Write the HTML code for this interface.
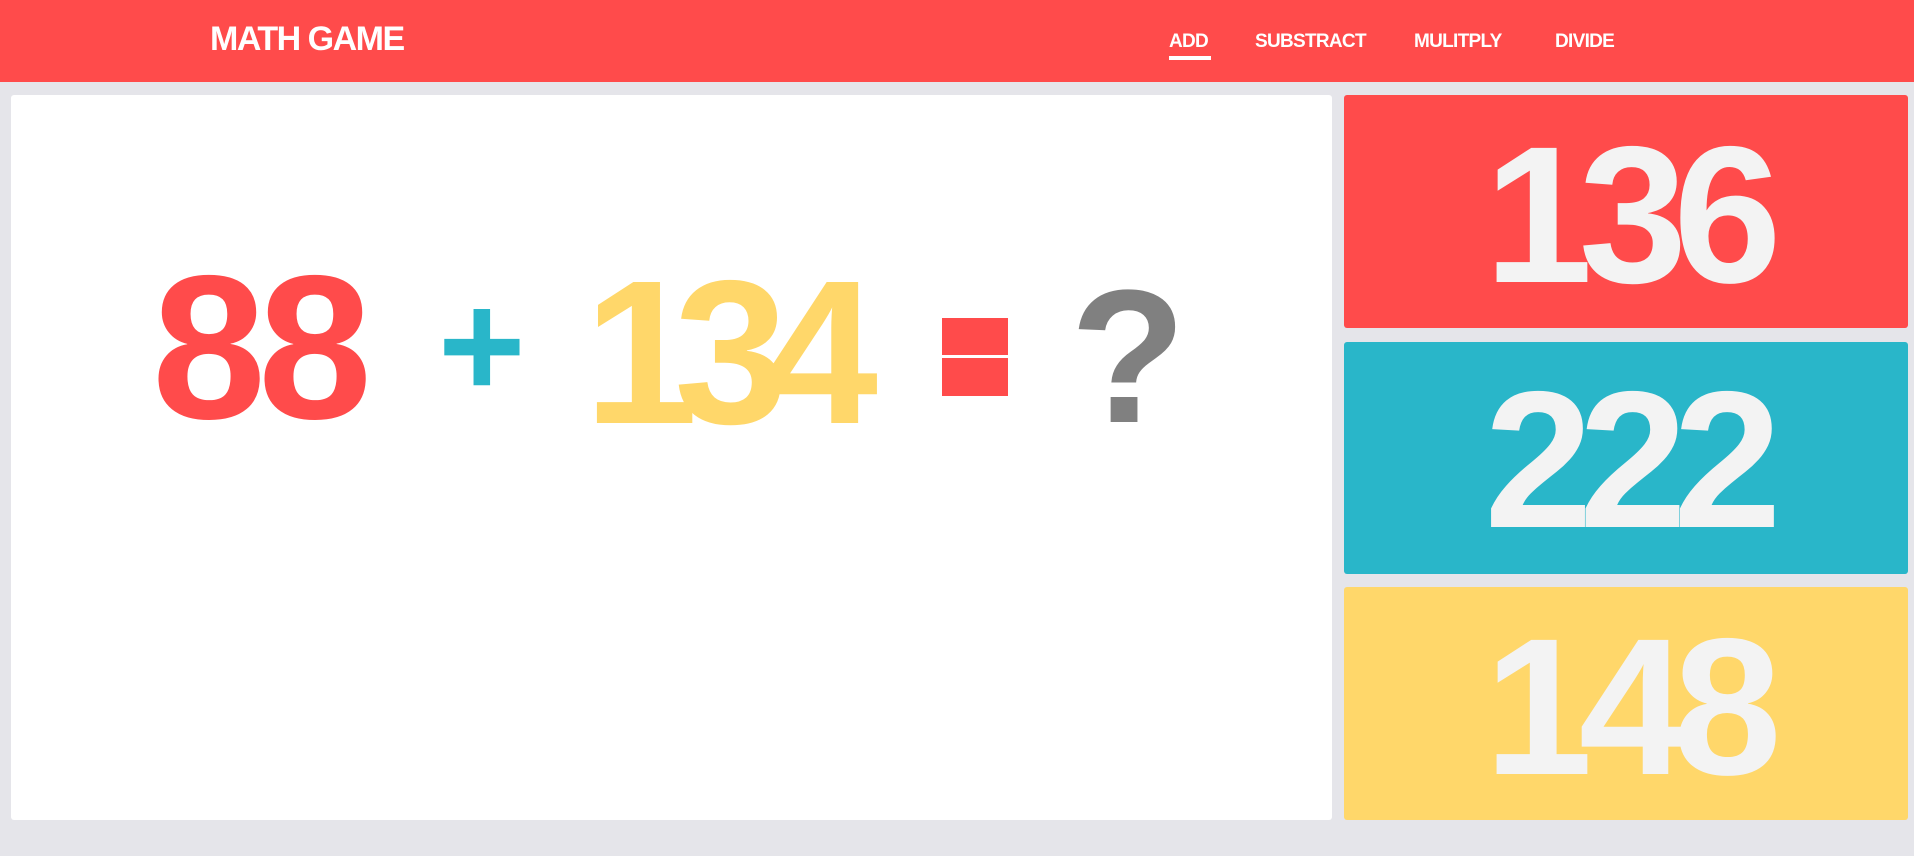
<!DOCTYPE html>
<html><head><meta charset="utf-8"><style>
body{margin:0;width:1914px;height:856px;background:#e5e5ea;font-family:"Liberation Sans",sans-serif;font-weight:900;position:relative;overflow:hidden}
.h{position:absolute;left:0;top:0;width:1914px;height:82px;background:#ff4b4b}
.a{position:absolute;white-space:nowrap;line-height:1}
.logo{left:210px;top:22px;font-size:34px;color:#fff;letter-spacing:-1.5px}
.nav{top:32px;font-size:19px;color:#fff;letter-spacing:-0.7px}
.card{position:absolute;border-radius:3px}
.n{position:absolute;text-align:center;font-weight:900;line-height:1;letter-spacing:-14px}
</style></head><body>
<div class="h"></div>
<div class="a logo">MATH GAME</div>
<div class="a nav" style="left:1169px">ADD</div>
<div style="position:absolute;left:1169px;top:56px;width:42px;height:4px;background:#fff"></div>
<div class="a nav" style="left:1255px">SUBSTRACT</div>
<div class="a nav" style="left:1414px">MULITPLY</div>
<div class="a nav" style="left:1555px">DIVIDE</div>
<div class="card" style="left:11px;top:95px;width:1321px;height:725px;background:#fff"></div>
<div class="card" style="left:1344px;top:95px;width:564px;height:233px;background:#ff4b4b"></div>
<div class="card" style="left:1344px;top:342px;width:564px;height:232px;background:#29b6c9"></div>
<div class="card" style="left:1344px;top:587px;width:564px;height:233px;background:#ffd76a"></div>
<div class="a" style="left:152px;top:245px;font-size:205px;color:#ff4b4b;letter-spacing:-8px">88</div>
<div class="a" style="left:438px;top:270px;font-size:150px;color:#29b6c9">+</div>
<div class="a" style="left:584px;top:250px;font-size:205px;color:#ffd76a;letter-spacing:-24px">134</div>
<div style="position:absolute;left:942px;top:318px;width:66px;height:37px;background:#ff4b4b"></div>
<div style="position:absolute;left:942px;top:358px;width:66px;height:38px;background:#ff4b4b"></div>
<div class="a" style="left:1070px;top:262px;font-size:190px;color:#808080">?</div>
<div class="n" style="left:1344px;width:564px;top:118px;font-size:195px;color:#f3f3f3">136</div>
<div class="n" style="left:1344px;width:564px;top:363px;font-size:195px;color:#f3f3f3">222</div>
<div class="n" style="left:1344px;width:564px;top:610px;font-size:195px;color:#f3f3f3">148</div>
</body></html>
